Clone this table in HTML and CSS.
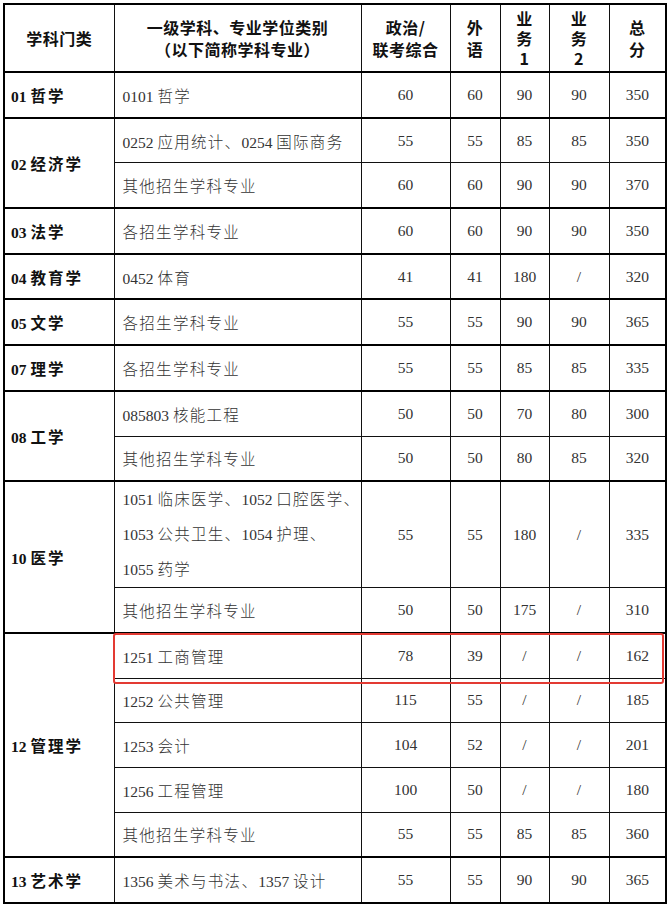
FILE: index.html
```html
<!DOCTYPE html>
<html lang="zh-CN">
<head>
<meta charset="utf-8">
<link rel="stylesheet" href="styles.css">
</head>
<body>
<div class="wrap">
<table class="t">
<colgroup>
<col class="c1"><col class="c2"><col class="c3"><col class="c4"><col class="c5"><col class="c6"><col class="c7">
</colgroup>
<thead>
<tr>
<th>学科门类</th>
<th>一级学科、专业学位类别<br>（以下简称学科专业）</th>
<th>政治/<br>联考综合</th>
<th>外<br>语</th>
<th class="tight">业<br>务<br>1</th>
<th class="tight">业<br>务<br>2</th>
<th>总<br>分</th>
</tr>
</thead>
<tbody>
<tr class="s"><td class="cat"><span class="d">01 </span>哲学</td><td class="name"><span class="d">0101 </span>哲学</td><td class="n">60</td><td class="n">60</td><td class="n">90</td><td class="n">90</td><td class="n">350</td></tr>
<tr class="s"><td class="cat" rowspan="2"><span class="d">02 </span>经济学</td><td class="name"><span class="d">0252 </span>应用统计、<span class="d">0254 </span>国际商务</td><td class="n">55</td><td class="n">55</td><td class="n">85</td><td class="n">85</td><td class="n">350</td></tr>
<tr class="i"><td class="name">其他招生学科专业</td><td class="n">60</td><td class="n">60</td><td class="n">90</td><td class="n">90</td><td class="n">370</td></tr>
<tr class="s"><td class="cat"><span class="d">03 </span>法学</td><td class="name">各招生学科专业</td><td class="n">60</td><td class="n">60</td><td class="n">90</td><td class="n">90</td><td class="n">350</td></tr>
<tr class="s"><td class="cat"><span class="d">04 </span>教育学</td><td class="name"><span class="d">0452 </span>体育</td><td class="n">41</td><td class="n">41</td><td class="n">180</td><td class="n">/</td><td class="n">320</td></tr>
<tr class="s"><td class="cat"><span class="d">05 </span>文学</td><td class="name">各招生学科专业</td><td class="n">55</td><td class="n">55</td><td class="n">90</td><td class="n">90</td><td class="n">365</td></tr>
<tr class="s"><td class="cat"><span class="d">07 </span>理学</td><td class="name">各招生学科专业</td><td class="n">55</td><td class="n">55</td><td class="n">85</td><td class="n">85</td><td class="n">335</td></tr>
<tr class="s"><td class="cat" rowspan="2"><span class="d">08 </span>工学</td><td class="name"><span class="d">085803 </span>核能工程</td><td class="n">50</td><td class="n">50</td><td class="n">70</td><td class="n">80</td><td class="n">300</td></tr>
<tr class="i"><td class="name">其他招生学科专业</td><td class="n">50</td><td class="n">50</td><td class="n">80</td><td class="n">85</td><td class="n">320</td></tr>
<tr class="s tall"><td class="cat" rowspan="2"><span class="d">10 </span>医学</td><td class="name multi"><span class="d">1051 </span>临床医学、<span class="d">1052 </span>口腔医学、<br><span class="d">1053 </span>公共卫生、<span class="d">1054 </span>护理、<br><span class="d">1055 </span>药学</td><td class="n">55</td><td class="n">55</td><td class="n">180</td><td class="n">/</td><td class="n">335</td></tr>
<tr class="i"><td class="name">其他招生学科专业</td><td class="n">50</td><td class="n">50</td><td class="n">175</td><td class="n">/</td><td class="n">310</td></tr>
<tr class="s"><td class="cat" rowspan="5"><span class="d">12 </span>管理学</td><td class="name"><span class="d">1251 </span>工商管理</td><td class="n">78</td><td class="n">39</td><td class="n">/</td><td class="n">/</td><td class="n">162</td></tr>
<tr class="i"><td class="name"><span class="d">1252 </span>公共管理</td><td class="n">115</td><td class="n">55</td><td class="n">/</td><td class="n">/</td><td class="n">185</td></tr>
<tr class="i"><td class="name"><span class="d">1253 </span>会计</td><td class="n">104</td><td class="n">52</td><td class="n">/</td><td class="n">/</td><td class="n">201</td></tr>
<tr class="i"><td class="name"><span class="d">1256 </span>工程管理</td><td class="n">100</td><td class="n">50</td><td class="n">/</td><td class="n">/</td><td class="n">180</td></tr>
<tr class="i"><td class="name">其他招生学科专业</td><td class="n">55</td><td class="n">55</td><td class="n">85</td><td class="n">85</td><td class="n">360</td></tr>
<tr class="s"><td class="cat"><span class="d">13 </span>艺术学</td><td class="name"><span class="d">1356 </span>美术与书法、<span class="d">1357 </span>设计</td><td class="n">55</td><td class="n">55</td><td class="n">90</td><td class="n">90</td><td class="n">365</td></tr>
</tbody>
</table>
<div class="hl"></div>
</div>
</body>
</html>
```
FILE: styles.css
```css
html, body {
  margin: 0;
  padding: 0;
  background: #fff;
}
.wrap {
  position: relative;
  padding: 3px 0 0 3px;
}
.t {
  border-collapse: collapse;
  table-layout: fixed;
  width: 663px;
  border: 2px solid #000;
}
.c1 { width: 110px; }
.c2 { width: 247px; }
.c3 { width: 89px; }
.c4 { width: 50px; }
.c5 { width: 49px; }
.c6 { width: 60px; }
.c7 { width: 57px; }
.t th, .t td {
  border: 1px solid #111;
  padding: 0;
}
.t th {
  font-family: "Noto Sans CJK SC", "Liberation Sans", sans-serif;
  font-weight: 700;
  font-size: 16px;
  line-height: 22px;
  color: #111;
  height: 66px;
  text-align: center;
  vertical-align: middle;
  border-bottom: 2px solid #000;
  letter-spacing: 0.5px;
}
.t th.tight {
  line-height: 20px;
}
.t td {
  font-family: "Liberation Serif", "Noto Sans CJK SC", serif;
  font-size: 15.5px;
  height: 43.7px;
  vertical-align: middle;
  color: #333;
  white-space: nowrap;
}
.t tr.s td {
  border-top: 2px solid #000;
}
.t tr.tall td {
  height: 103px;
}
.t td.cat {
  font-weight: 700;
  color: #111;
  text-align: left;
  padding-left: 6px;
  letter-spacing: 2px;
}
.t td.name {
  text-align: left;
  padding-left: 8px;
  letter-spacing: 1.3px;
  font-weight: 300;
}
.t td .d {
  letter-spacing: 0;
}
.t td.multi {
  line-height: 35px;
}
.t td.n {
  text-align: center;
}
.hl {
  position: absolute;
  left: 113px;
  top: 633px;
  width: 551px;
  height: 51px;
  box-sizing: border-box;
  border: 2px solid #e33a33;
  border-radius: 3px;
}
```
